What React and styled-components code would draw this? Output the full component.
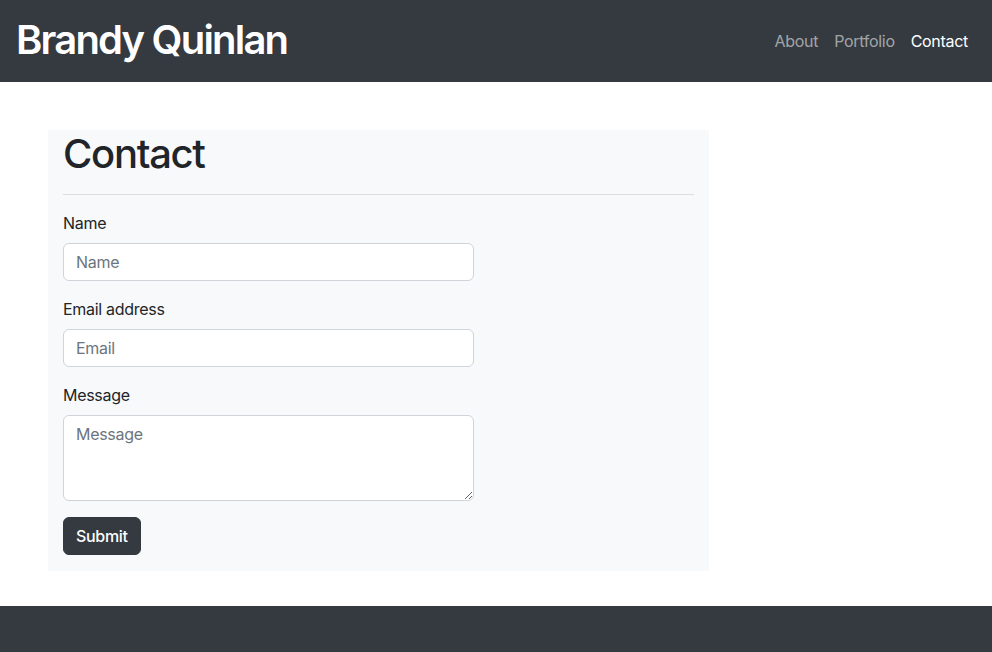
import React from 'react';
import styled, { createGlobalStyle } from 'styled-components';

const GlobalStyle = createGlobalStyle`
  * {
    box-sizing: border-box;
  }

  body {
    margin: 0;
    font-family: Inter, "Noto Sans", "Liberation Sans", sans-serif;
    font-size: 16px;
    line-height: 1.5;
    letter-spacing: -0.3px;
    color: #212529;
    background: #fff;
  }
`;

const Page = styled.div`
  min-height: 100vh;
  display: flex;
  flex-direction: column;
`;

const Navbar = styled.nav`
  height: 82px;
  background: #343a40;
  display: flex;
  align-items: center;
  justify-content: space-between;
  padding: 0 16px;
`;

const Brand = styled.a`
  font-size: 40px;
  font-weight: 600;
  line-height: 1.2;
  color: #fff;
  text-decoration: none;
  letter-spacing: -1.8px;
  margin-top: -2px;
`;

const NavLinks = styled.div`
  display: flex;
`;

const NavLink = styled.a`
  padding: 8px 8px;
  font-size: 16px;
  color: ${props => props.active ? '#fff' : 'rgba(255, 255, 255, 0.55)'};
  text-decoration: none;
`;

const Main = styled.main`
  flex: 1;
  padding: 48px 0 35px 48px;
`;

const Card = styled.section`
  width: 661px;
  background: #f8f9fa;
  padding: 0 15px 16px;
`;

const Heading = styled.h1`
  margin: 0 0 8px;
  font-size: 40px;
  font-weight: 500;
  line-height: 1.2;
  letter-spacing: -1.3px;
`;

const Rule = styled.hr`
  margin: 16px 0;
  border: 0;
  border-top: 1px solid #dcdee0;
`;

const Form = styled.form`
  display: flex;
  flex-direction: column;
  gap: 16px;
  width: 411px;
`;

const Field = styled.div`
  display: flex;
  flex-direction: column;
`;

const Label = styled.label`
  margin-bottom: 8px;
`;

const Input = styled.input`
  height: 38px;
  padding: 6px 12px;
  font: inherit;
  letter-spacing: inherit;
  color: #212529;
  background: #fff;
  border: 1px solid #ced4da;
  border-radius: 6px;

  &::placeholder {
    color: #6c757d;
  }
`;

const TextArea = styled.textarea`
  height: 86px;
  padding: 6px 12px;
  font: inherit;
  letter-spacing: inherit;
  color: #212529;
  background: #fff;
  border: 1px solid #ced4da;
  border-radius: 6px;
  resize: vertical;

  &::placeholder {
    color: #6c757d;
  }
`;

const Button = styled.button`
  align-self: flex-start;
  height: 38px;
  padding: 6px 12px;
  font: inherit;
  font-weight: 500;
  letter-spacing: inherit;
  color: #fff;
  background: #343a40;
  border: 1px solid #343a40;
  border-radius: 6px;
`;

const Footer = styled.footer`
  height: 46px;
  background: #343a40;
`;

export default function App() {
  return (
    <Page>
      <GlobalStyle />
      <Navbar>
        <Brand href="#">Brandy Quinlan</Brand>
        <NavLinks>
          <NavLink href="#">About</NavLink>
          <NavLink href="#">Portfolio</NavLink>
          <NavLink href="#" active={1}>Contact</NavLink>
        </NavLinks>
      </Navbar>
      <Main>
        <Card>
          <Heading>Contact</Heading>
          <Rule />
          <Form onSubmit={e => e.preventDefault()}>
            <Field>
              <Label htmlFor="name">Name</Label>
              <Input id="name" type="text" placeholder="Name" />
            </Field>
            <Field>
              <Label htmlFor="email">Email address</Label>
              <Input id="email" type="email" placeholder="Email" />
            </Field>
            <Field>
              <Label htmlFor="message">Message</Label>
              <TextArea id="message" placeholder="Message" />
            </Field>
            <Button type="submit">Submit</Button>
          </Form>
        </Card>
      </Main>
      <Footer />
    </Page>
  );
}
